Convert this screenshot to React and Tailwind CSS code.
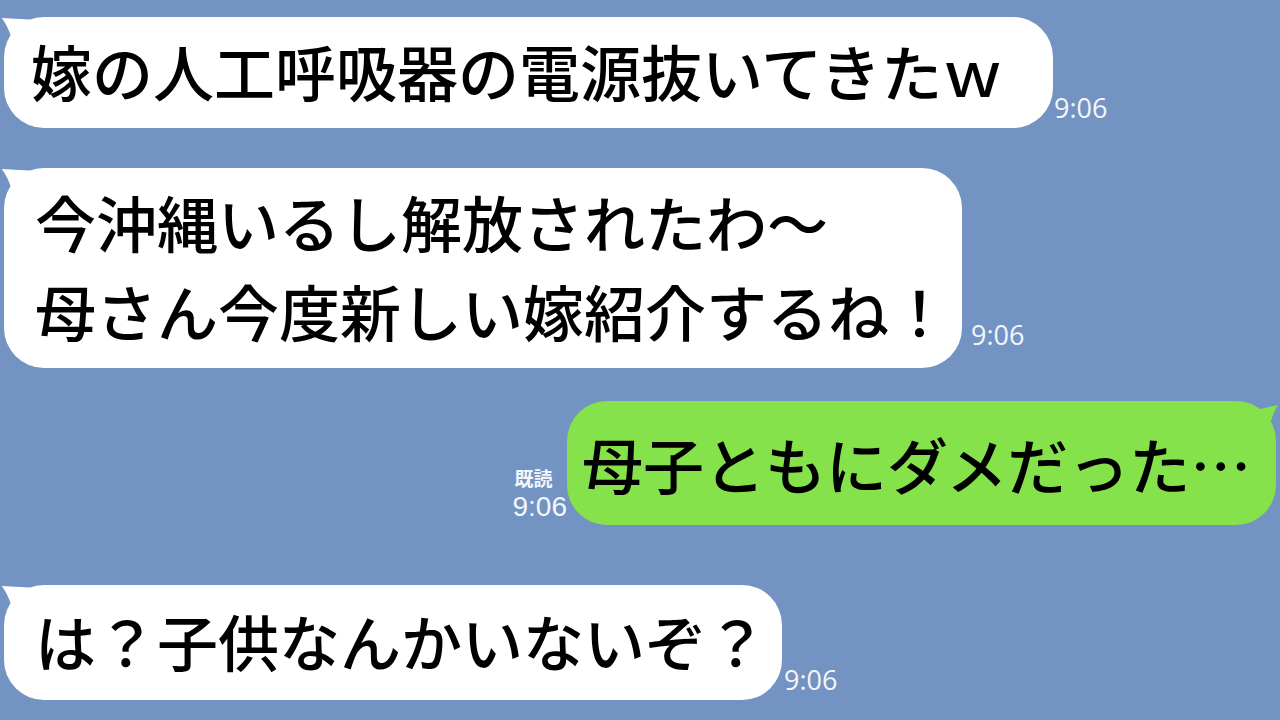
export default function App() {
  const jp = "font-['Noto_Sans_CJK_JP',sans-serif] font-medium";
  const ts = "font-['Open_Sans',sans-serif] text-[27px] leading-none text-[#f3f6fb] whitespace-nowrap";
  const LeftTail = () => (
    <svg className="absolute left-[-4px] top-[-2px]" width="40" height="30" viewBox="0 0 40 30">
      <path d="M1.7 3 L30 4.5 L25 22 L10.6 20 Q 7 10 1.7 3 Z" fill="#ffffff" />
    </svg>
  );
  return (
    <div lang="ja" className="w-[1280px] h-[720px] bg-[#7393c2] overflow-hidden flex flex-col">
      {/* Row 1 */}
      <div className="flex items-end pl-[4px] mt-[17px]">
        <div className={`relative w-[1049px] h-[111px] bg-white rounded-[40px] flex items-center pl-[27px] pb-[4px] text-[61px] leading-none text-black whitespace-nowrap ${jp}`}>
          <LeftTail />
          <span className="relative">嫁の人工呼吸器の電源抜いてきたｗ</span>
        </div>
        <div className={`${ts} ml-[1px] mb-[7px]`}>9:06</div>
      </div>

      {/* Row 2 */}
      <div className="flex items-end pl-[4px] mt-[40px]">
        <div className={`relative w-[958px] h-[200px] bg-white rounded-[40px] flex flex-col justify-center pl-[31px] pb-[4px] text-[61px] leading-[89px] text-black whitespace-nowrap ${jp}`}>
          <LeftTail />
          <span className="relative">今沖縄いるし解放されたわ～</span>
          <span className="relative">母さん今度新しい嫁紹介するね！</span>
        </div>
        <div className={`${ts} ml-[9px] mb-[20px]`}>9:06</div>
      </div>

      {/* Row 3 */}
      <div className="flex items-end justify-end pr-[4px] mt-[33px]">
        <div className="flex flex-col items-start mb-[4px]">
          <div className="font-['Noto_Sans_CJK_JP',sans-serif] text-[19px] leading-none font-bold text-[#f3f6fb] pl-[2px] mb-[6px]">既読</div>
          <div className="font-['Liberation_Sans',sans-serif] text-[28px] leading-none text-[#f3f6fb] whitespace-nowrap">9:06</div>
        </div>
        <div className={`relative w-[709px] h-[124px] bg-[#85e24b] rounded-[40px] flex items-center pl-[15px] text-[61px] leading-none text-black whitespace-nowrap ${jp}`}>
          <svg className="absolute right-[-4px] top-0" width="30" height="30" viewBox="0 0 30 30">
            <path d="M28 4 L8 8.5 L12 24 L21 20 Q 24 10 28 4 Z" fill="#85e24b" />
          </svg>
          <span className="relative">母子ともにダメだった…</span>
        </div>
      </div>

      {/* Row 4 */}
      <div className="flex items-end pl-[4px] mt-[60px]">
        <div className={`relative w-[778px] h-[115px] bg-white rounded-[40px] flex items-center pl-[31px] pb-[4px] text-[61px] leading-none text-black whitespace-nowrap ${jp}`}>
          <LeftTail />
          <span className="relative">は？子供なんかいないぞ？</span>
        </div>
        <div className={`${ts} ml-[2px] mb-[7px]`}>9:06</div>
      </div>
    </div>
  );
}
